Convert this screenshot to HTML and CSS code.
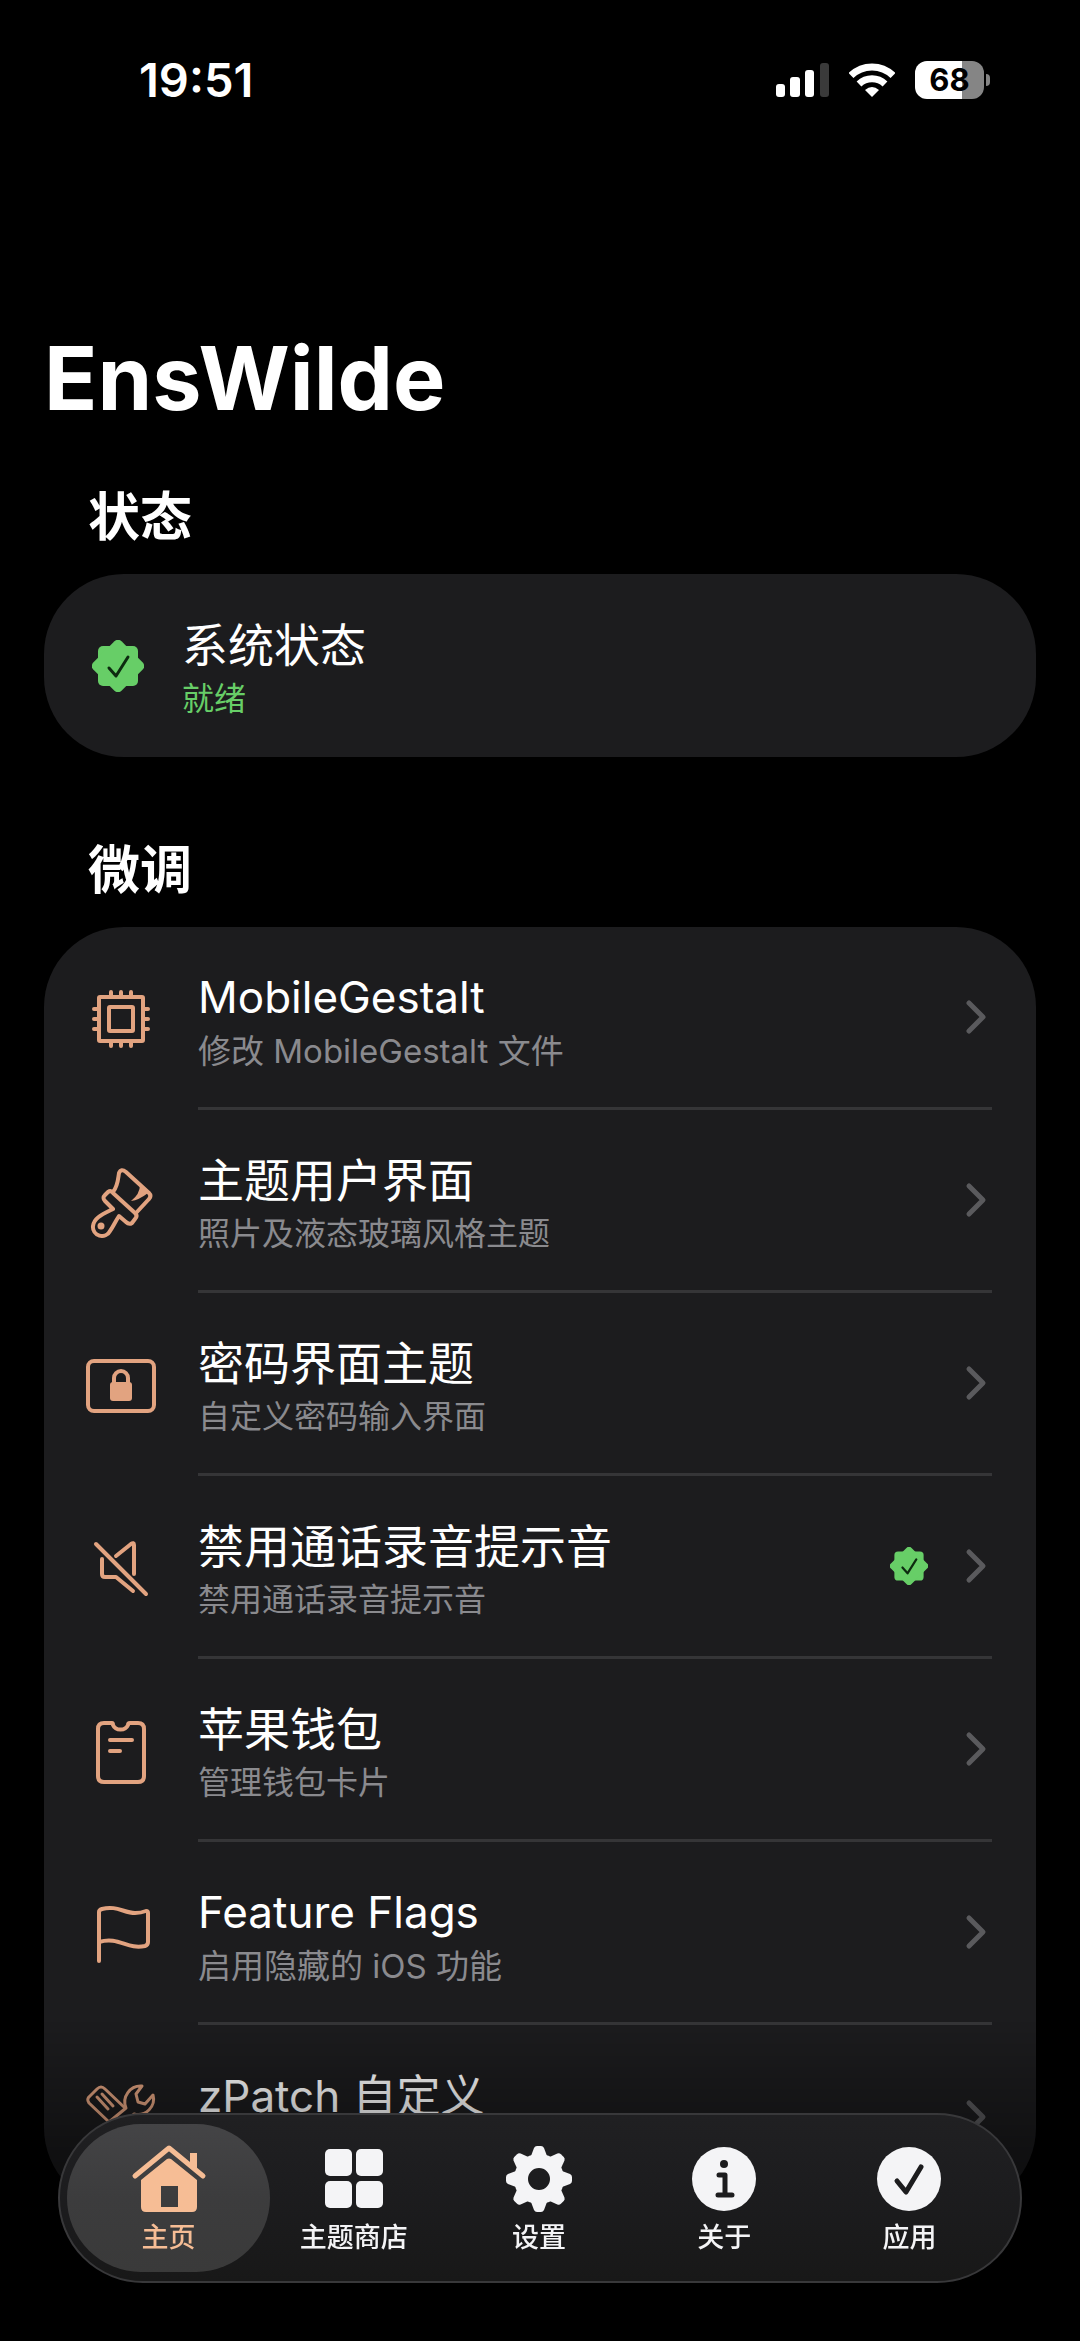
FILE: index.html
```html
<!DOCTYPE html>
<html lang="zh-CN">
<head>
<meta charset="UTF-8">
<meta name="viewport" content="width=device-width, initial-scale=1.0">
<title>EnsWilde</title>
<link rel="stylesheet" href="styles.css">
</head>
<body>
<svg width="0" height="0" class="defs" aria-hidden="true">
<symbol id="seal" viewBox="0 0 52 52">
<rect x="6" y="6" width="40" height="40" rx="5" fill="#67ce67"/>
<rect x="6" y="6" width="40" height="40" rx="5" fill="#67ce67" transform="rotate(45 26 26)"/>
<path d="M17 28l7 8 12-19" fill="none" stroke="#0d2b10" stroke-width="3" stroke-linecap="round" stroke-linejoin="round"/>
</symbol>
<symbol id="chevron" viewBox="0 0 24 36">
<path d="M5 4l14 14L5 32" fill="none" stroke="#5a5a5d" stroke-width="5" stroke-linecap="round" stroke-linejoin="round"/>
</symbol>
</svg>

<header class="status-bar">
<span class="time">19:51</span>
<div class="indicators">
<svg width="53" height="34" viewBox="0 0 53 34">
<rect y="21" width="9" height="13" rx="3" fill="#fff"/>
<rect x="14" y="14" width="10" height="20" rx="3" fill="#fff"/>
<rect x="29" y="7" width="9" height="27" rx="3" fill="#fff"/>
<rect x="44" width="9" height="34" rx="3" fill="#3a3a3a"/>
</svg>
<svg width="46" height="34" viewBox="0 0 46 34" fill="none" stroke="#fff" stroke-width="7">
<path d="M2 12.500a30 30 0 0 1 42 0"/>
<path d="M10 21a19 19 0 0 1 26 0"/>
<path d="M23 34l-7-7q7-6 14 0z" fill="#fff" stroke="none"/>
</svg>
<div class="battery"><span class="level">68</span></div>
</div>
</header>

<main>
<h1>EnsWilde</h1>

<h2>状态</h2>
<section class="card status">
<svg width="52" height="52"><use href="#seal"/></svg>
<div class="text">
<div class="name">系统状态</div>
<div class="note ready">就绪</div>
</div>
</section>

<h2>微调</h2>
<section class="card">
<a href="#" class="row latin">
<svg class="icon" viewBox="0 0 72 72">
<rect x="14" y="14" width="44" height="44" rx="1"/>
<rect x="24" y="24" width="24" height="24" rx="1"/>
<path d="M26 9v5M36 9v5M46 9v5M26 58v5M36 58v5M46 58v5M9 26h5M9 36h5M9 46h5M58 26h5M58 36h5M58 46h5"/>
</svg>
<div class="body">
<div class="text">
<div class="name">MobileGestalt</div>
<div class="note">修改 MobileGestalt 文件</div>
</div>
<svg class="chevron"><use href="#chevron"/></svg>
</div>
</a>
<a href="#" class="row">
<svg class="icon" viewBox="0 0 72 72">
<path d="M28 26C33 20 33 13 34 7Q36 2 41 6L64 27Q67 30 64 33L51 47"/>
<path d="M28 27L50 47Q53 50 50 53L47 57Q44 59 41 56L34 50C30 56 28 61 25 65A9 9 0 0 1 8 60C9 52 16 49 28 43L20 35Q17 32 20 29L23 26Q26 24 28 27z"/>
<circle cx="16" cy="60" r="3.500" fill="#e2a380" stroke="none"/>
<path d="M55 19Q55 28 46 35Q54 34 63 27z" fill="#e2a380" stroke="none"/>
</svg>
<div class="body">
<div class="text">
<div class="name">主题用户界面</div>
<div class="note">照片及液态玻璃风格主题</div>
</div>
<svg class="chevron"><use href="#chevron"/></svg>
</div>
</a>
<a href="#" class="row">
<svg class="icon" viewBox="0 0 72 72">
<rect x="3" y="12" width="66" height="50" rx="6"/>
<rect x="25" y="33" width="22" height="19" rx="3" fill="#e2a380" stroke="none"/>
<path d="M29 34v-5a7 7 0 0 1 14 0v5"/>
</svg>
<div class="body">
<div class="text">
<div class="name">密码界面主题</div>
<div class="note">自定义密码输入界面</div>
</div>
<svg class="chevron"><use href="#chevron"/></svg>
</div>
</a>
<a href="#" class="row">
<svg class="icon" viewBox="0 0 72 72">
<path d="M11 12L61 62"/>
<path d="M17 27V42Q17 45 20 45H31L48 59M31 24L46 12Q49 10 49 13V42"/>
</svg>
<div class="body">
<div class="text">
<div class="name">禁用通话录音提示音</div>
<div class="note">禁用通话录音提示音</div>
</div>
<svg class="seal-small" width="38" height="38"><use href="#seal"/></svg>
<svg class="chevron"><use href="#chevron"/></svg>
</div>
</a>
<a href="#" class="row">
<svg class="icon" viewBox="0 0 72 72">
<path d="M19 8H27Q28 8 28 10A8 7 0 0 0 43 10Q43 8 45 8H53Q59 8 59 14V61Q59 67 53 67H19Q13 67 13 61V14Q13 8 19 8z"/>
<path d="M25 25H47M25 36H35"/>
</svg>
<div class="body">
<div class="text">
<div class="name">苹果钱包</div>
<div class="note">管理钱包卡片</div>
</div>
<svg class="chevron"><use href="#chevron"/></svg>
</div>
</a>
<a href="#" class="row latin">
<svg class="icon" viewBox="0 0 72 72">
<path d="M14 63V14Q14 12 17 11C31 7 39 15 50 15Q56 15 61 13Q63 13 63 15V44Q63 47 60 48C42 52 34 38 14 44"/>
</svg>
<div class="body">
<div class="text">
<div class="name">Feature Flags</div>
<div class="note">启用隐藏的 iOS 功能</div>
</div>
<svg class="chevron"><use href="#chevron"/></svg>
</div>
</a>
<a href="#" class="row latin">
<svg class="icon thin" viewBox="0 0 72 72">
<path d="M24 41L4 22Q1 18 5 15L12 8Q16 4 20 8L40 27M12 16L23 28M17 13L28 25"/>
<path d="M24 41L41 27A16 16 0 0 1 57 5L51 13L53 21L60 23L68 14C71 25 61 36 49 33L28 54"/>
</svg>
<div class="body">
<div class="text">
<div class="name">zPatch 自定义</div>
</div>
<svg class="chevron"><use href="#chevron"/></svg>
</div>
</a>
</section>
</main>

<div class="fade"></div>

<nav class="tab-bar">
<a href="#" class="tab active">
<svg width="76" height="72" viewBox="0 0 76 72" fill="#f6bd95">
<path d="M59 10h7v18l-7-6z"/>
<path d="M4 33L38 5l34 28" fill="none" stroke="#f6bd95" stroke-width="5" stroke-linecap="round" stroke-linejoin="round"/>
<path fill-rule="evenodd" d="M10 37L36 16q2-1 4 0l26 21v27q0 5-5 5H15q-5 0-5-5zM30 43v21h17V43z"/>
</svg>
<span>主页</span>
</a>
<a href="#" class="tab">
<svg width="72" height="72" viewBox="0 0 72 72" fill="#f4f4f6">
<rect x="7" y="6" width="27" height="27" rx="5"/>
<rect x="38" y="6" width="27" height="27" rx="5"/>
<rect x="7" y="38" width="27" height="27" rx="5"/>
<rect x="38" y="38" width="27" height="27" rx="5"/>
</svg>
<span>主题商店</span>
</a>
<a href="#" class="tab">
<svg width="72" height="72" viewBox="-36 -36 72 72" fill="#f4f4f6">
<circle r="18" fill="none" stroke="#f4f4f6" stroke-width="14"/>
<path id="tooth" d="M-8-23l3-8q1-2 3-2h4q2 0 3 2l3 8z"/>
<use href="#tooth" transform="rotate(45)"/>
<use href="#tooth" transform="rotate(90)"/>
<use href="#tooth" transform="rotate(135)"/>
<use href="#tooth" transform="rotate(180)"/>
<use href="#tooth" transform="rotate(225)"/>
<use href="#tooth" transform="rotate(270)"/>
<use href="#tooth" transform="rotate(315)"/>
</svg>
<span>设置</span>
</a>
<a href="#" class="tab">
<svg width="72" height="72" viewBox="-36 -36 72 72">
<circle r="32" fill="#f4f4f6"/>
<circle cy="-15" r="4" fill="#1c1c1e"/>
<path d="M-5-4h6v20M-6 16H8" fill="none" stroke="#1c1c1e" stroke-width="5" stroke-linecap="round" stroke-linejoin="round"/>
</svg>
<span>关于</span>
</a>
<a href="#" class="tab">
<svg width="72" height="72" viewBox="-36 -36 72 72">
<circle r="32" fill="#f4f4f6"/>
<path d="M-12 2l9 11 15-25" fill="none" stroke="#1c1c1e" stroke-width="5" stroke-linecap="round" stroke-linejoin="round"/>
</svg>
<span>应用</span>
</a>
</nav>
</body>
</html>
```
FILE: styles.css
```css
* {
    box-sizing: border-box;
}

body {
    margin: 0;
    min-height: 100vh;
    background: #000;
    color: #fff;
    font-family: Inter, "Noto Sans CJK SC", sans-serif;
}

a {
    color: inherit;
    text-decoration: none;
}

svg {
    display: block;
    flex-shrink: 0;
}

.defs {
    position: absolute;
}

.status-bar {
    display: flex;
    justify-content: space-between;
    align-items: center;
    height: 160px;
    padding: 0 96px 0 139px;
}

.time {
    font-size: 47px;
    font-weight: 600;
    line-height: 60px;
}

.indicators {
    display: flex;
    align-items: center;
    gap: 20px;
}

.battery {
    position: relative;
    width: 69px;
    height: 38px;
    border-radius: 12px;
    background: linear-gradient(90deg, #fff 68%, #858585 68%);
    color: #000;
    text-align: center;
}

.battery::after {
    content: "";
    position: absolute;
    top: 13px;
    right: -6px;
    width: 4px;
    height: 12px;
    border-radius: 0 4px 4px 0;
    background: #858585;
}

.level {
    font-size: 31px;
    font-weight: 700;
    line-height: 38px;
}

main {
    padding: 162px 44px 130px;
}

h1 {
    margin: 0 0 22px;
    font-size: 88px;
    font-weight: 700;
    line-height: 112px;
}

h2 {
    margin: 0;
    padding: 30px 44px 24px;
    font-size: 52px;
    font-weight: 700;
    line-height: 64px;
}

.card {
    padding: 0 44px 0 41px;
    border-radius: 80px;
    background: #1c1c1e;
}

.status {
    display: flex;
    align-items: center;
    gap: 38px;
    margin-bottom: 52px;
    padding-left: 48px;
}

.text {
    flex: 1;
    min-height: 183px;
    padding: 42px 0 33px;
}

.name {
    font-size: 46px;
    line-height: 58px;
}

.note {
    color: #8a8a8e;
    font-size: 32px;
    line-height: 50px;
}

.note.ready {
    color: #67ce67;
}

.row {
    display: flex;
    align-items: center;
    gap: 41px;
}

.latin .name {
    font-size: 44px;
}

.latin .note {
    font-size: 33px;
}

.icon {
    width: 72px;
    height: 72px;
    fill: none;
    stroke: #e2a380;
    stroke-width: 4;
    stroke-linecap: round;
    stroke-linejoin: round;
}

.icon.thin {
    stroke-width: 3;
}

.body {
    flex: 1;
    display: flex;
    align-items: center;
    height: 183px;
    padding-right: 4px;
    border-bottom: 3px solid #353537;
}

.row:last-child .body {
    border-bottom: none;
}

.chevron {
    width: 24px;
    height: 36px;
}

.seal-small {
    margin-right: 36px;
}

.fade {
    position: fixed;
    left: 0;
    right: 0;
    bottom: 0;
    height: 320px;
    background: linear-gradient(transparent, rgba(0, 0, 0, 0.4) 40%, rgba(0, 0, 0, 0.9));
}

.tab-bar {
    position: fixed;
    left: 58px;
    right: 58px;
    bottom: 58px;
    display: grid;
    grid-template-columns: repeat(5, 1fr);
    height: 170px;
    padding: 0 18px 0 16px;
    border: 2px solid #38383a;
    border-radius: 85px;
    background: linear-gradient(#202022, #1c1c1e 50%, #181818);
}

.tab {
    position: relative;
    display: flex;
    flex-direction: column;
    align-items: center;
    gap: 1px;
    padding-top: 28px;
    color: #f4f4f6;
    font-size: 27px;
    font-weight: 500;
    line-height: 44px;
}

.tab.active {
    color: #f6bd95;
}

.tab.active::before {
    content: "";
    position: absolute;
    inset: 9px -9px;
    border-radius: 74px;
    background: linear-gradient(#444446, #3c3c3d 50%, #3a3a3a);
}

.tab svg,
.tab span {
    position: relative;
}
```
